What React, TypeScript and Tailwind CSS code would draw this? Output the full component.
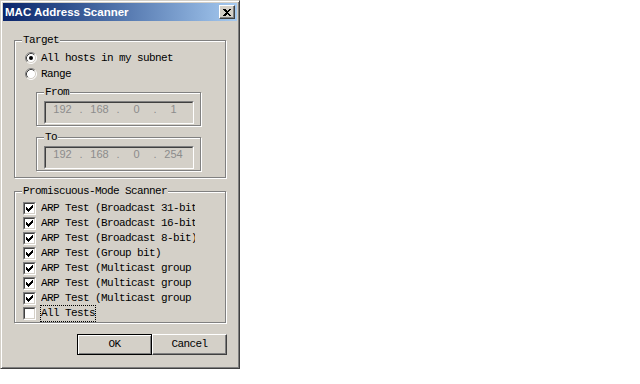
import React from "react";

const mono = "font-['Liberation_Mono','Courier_New',monospace] text-[11px] tracking-[-0.6px] text-black";

const Radio = ({ checked }: { checked?: boolean }) => (
  <svg width="12" height="12" viewBox="0 0 12 12" className="shrink-0">
    <circle cx="6" cy="6" r="5" fill="#fff" />
    <path d="M2.11 9.89 A5.5 5.5 0 0 1 9.89 2.11" stroke="#808080" fill="none" />
    <path d="M9.89 2.11 A5.5 5.5 0 0 1 2.11 9.89" stroke="#fff" fill="none" />
    <path d="M2.82 9.18 A4.5 4.5 0 0 1 9.18 2.82" stroke="#404040" fill="none" />
    <path d="M9.18 2.82 A4.5 4.5 0 0 1 2.82 9.18" stroke="#d4d0c8" fill="none" />
    {checked && <circle cx="6" cy="6" r="2" fill="#000" />}
  </svg>
);

const Check = ({ checked }: { checked?: boolean }) => (
  <div className="w-[13px] h-[13px] shrink-0 border border-t-[#808080] border-l-[#808080] border-r-white border-b-white">
    <div className="w-full h-full bg-white border border-t-[#404040] border-l-[#404040] border-r-[#d4d0c8] border-b-[#d4d0c8] flex items-center justify-center">
      {checked && (
        <svg width="7" height="7" viewBox="0 0 7 7" shapeRendering="crispEdges">
          <path d="M0 2h1v1h1v1h1v-1h1v-1h1v-1h1v-1h1v3h-1v1h-1v1h-1v1h-1v1h-1v-1h-1v-1h-1z" fill="#000" />
        </svg>
      )}
    </div>
  </div>
);

const IpBox = ({ parts }: { parts: string[] }) => (
  <div className="mt-[3px] ml-[7px] w-[150px] h-[23px] border border-t-[#808080] border-l-[#808080] border-r-white border-b-white">
    <div className="w-full h-full border border-t-[#404040] border-l-[#404040] border-r-[#d4d0c8] border-b-[#d4d0c8] flex items-start font-['Liberation_Sans',Arial,sans-serif] text-[11px] leading-[13px] text-[#8c8c8c]">
      {parts.map((p, i) => (
        <React.Fragment key={i}>
          {i > 0 && <span className="w-[4px] text-center">.</span>}
          <span className="w-[33px] text-center">{p}</span>
        </React.Fragment>
      ))}
    </div>
  </div>
);

const etched = "border border-[#808080] shadow-[inset_1px_1px_0_#fff,1px_1px_0_#fff] min-w-0";
const legend = `ml-[7px] px-[1px] bg-[#d4d0c8] leading-[12px] ${mono}`;

const tests = [
  "ARP Test (Broadcast 31-bit)",
  "ARP Test (Broadcast 16-bit)",
  "ARP Test (Broadcast 8-bit)",
  "ARP Test (Group bit)",
  "ARP Test (Multicast group 0)",
  "ARP Test (Multicast group 1)",
  "ARP Test (Multicast group 3)",
];

export default function App() {
  return (
    <div className="w-[640px] h-[384px] bg-white">
      <div className="w-[240px] h-[369px] bg-[#d4d0c8] border border-t-[#d4d0c8] border-l-[#d4d0c8] border-r-[#404040] border-b-[#404040] shadow-[inset_1px_1px_0_#fff,inset_-1px_-1px_0_#808080] p-[2px] flex flex-col">
        {/* title bar */}
        <div className="h-[18px] shrink-0 flex items-center justify-between bg-linear-to-r from-[#0a246a] to-[#a6caf0] pl-[2px] pr-[2px]">
          <span className="text-white font-bold text-[11.5px] leading-[18px] font-['Liberation_Sans',Arial,sans-serif]">MAC Address Scanner</span>
          <div className="w-[16px] h-[14px] bg-[#d4d0c8] border border-t-white border-l-white border-r-[#404040] border-b-[#404040] shadow-[inset_-1px_-1px_0_#808080] flex items-center justify-center">
            <svg width="8" height="7" viewBox="0 0 8 7" shapeRendering="crispEdges">
              <path d="M0 0h2l2 2l2-2h2l-3 3.5l3 3.5h-2l-2-2l-2 2h-2l3-3.5z" fill="#000" />
            </svg>
          </div>
        </div>

        {/* Target */}
        <fieldset className={`mt-[13px] ml-[11px] w-[212px] pb-[6px] ${etched}`}>
          <legend className={legend}>Target</legend>
          <div className="mt-[4px] ml-[10px] h-[16px] flex items-center gap-[4px]">
            <Radio checked />
            <span className={mono}>All hosts in my subnet</span>
          </div>
          <div className="ml-[10px] h-[16px] flex items-center gap-[4px]">
            <Radio />
            <span className={mono}>Range</span>
          </div>
          <fieldset className={`mt-[4px] ml-[21px] w-[165px] pb-[1px] ${etched}`}>
            <legend className={legend}>From</legend>
            <IpBox parts={["192", "168", "0", "1"]} />
          </fieldset>
          <fieldset className={`mt-[5px] ml-[21px] w-[165px] pb-[1px] ${etched}`}>
            <legend className={legend}>To</legend>
            <IpBox parts={["192", "168", "0", "254"]} />
          </fieldset>
        </fieldset>

        {/* Promiscuous-Mode Scanner */}
        <fieldset className={`mt-[7px] ml-[11px] w-[212px] pb-[1px] ${etched}`}>
          <legend className={legend}>Promiscuous-Mode Scanner</legend>
          <div className="mt-[4px] flex flex-col">
            {tests.map((t) => (
              <div key={t} className="ml-[8px] h-[15px] flex items-center gap-[5px]">
                <Check checked />
                <span className={`w-[154px] overflow-hidden whitespace-nowrap leading-[15px] ${mono}`}>{t}</span>
              </div>
            ))}
            <div className="ml-[8px] h-[15px] flex items-center gap-[4px]">
              <Check />
              <span className={`border border-dotted border-black leading-[15px] ${mono}`}>All Tests</span>
            </div>
          </div>
        </fieldset>

        {/* buttons */}
        <div className="mt-[11px] ml-[74px] flex">
          <button className={`w-[75px] h-[21px] bg-[#d4d0c8] border border-black shadow-[inset_1px_1px_0_#fff,inset_-1px_-1px_0_#808080] ${mono}`}>OK</button>
          <button className={`w-[75px] h-[21px] bg-[#d4d0c8] border border-t-white border-l-white border-r-[#404040] border-b-[#404040] shadow-[inset_-1px_-1px_0_#808080] ${mono}`}>Cancel</button>
        </div>
      </div>
    </div>
  );
}
